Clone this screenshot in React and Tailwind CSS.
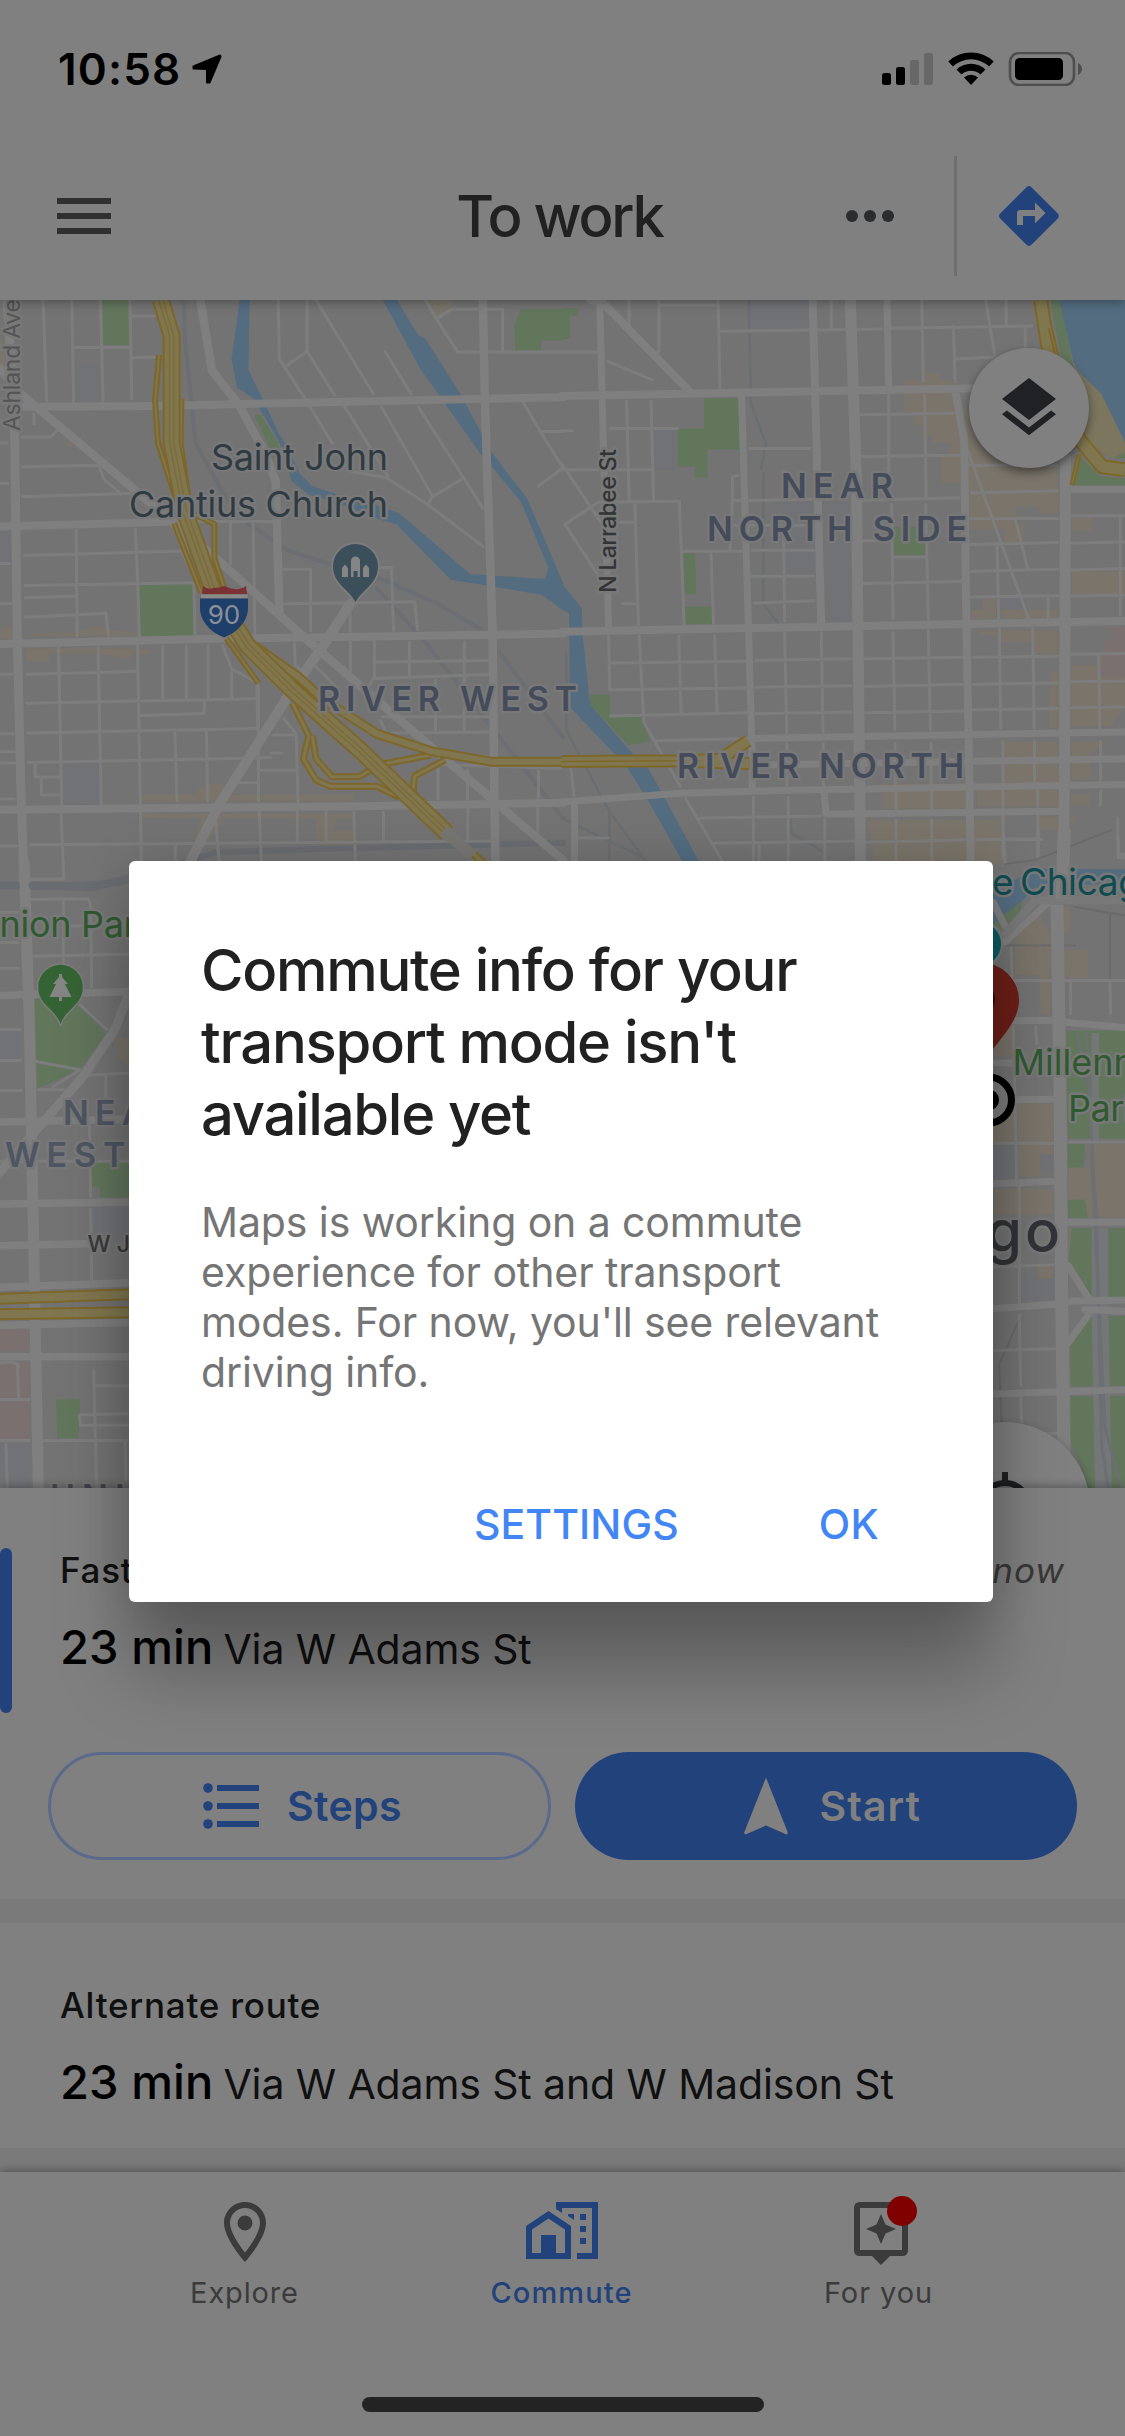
import React from "react";

const MINOR = "#7d7d7d";
const MAJOR = "#7f7f7f";

function Lines({ d, w = 3, color = MINOR, round = true }) {
  return (
    <path
      d={d}
      fill="none"
      stroke={color}
      strokeWidth={w}
      strokeLinejoin="round"
      strokeLinecap={round ? "round" : "butt"}
      vectorEffect="non-scaling-stroke"
    />
  );
}

function Highway({ d, w, stripe = false }) {
  return (
    <>
      <Lines d={d} w={w} color="#7d6729" round={false} />
      <Lines d={d} w={w - 4} color="#807750" round={false} />
      {stripe && <Lines d={d} w={5.5} color="#7d6c36" round={false} />}
      {stripe && <Lines d={d} w={2.5} color="#807750" round={false} />}
    </>
  );
}

function NorthWest() {
  return (
    <g transform="translate(0 290) scale(0.35906 0.38265)">
      <path fill="#707276" d="M205,200H285V290H205ZM0,625H35V710H0ZM175,1235H280V1345H175Z" />
      <path
        fill="#7a746a"
        d="M0,882H35V912H0ZM70,900L130,895L215,895L270,878L310,890L380,895V905H70ZM72,936H420V952H365V965L260,950H137V970H72ZM1180,26H1255V45L1215,75L1190,40ZM395,1320H550V1305L580,1290L630,1292V1320H985V1335H395ZM395,1368H985V1382H940L925,1412H985V1450H880V1382H625L580,1440H535L560,1382H395ZM195,390L208,405L192,418L180,405ZM0,130L15,150V210L0,200Z"
      />
      <path
        fill="#62765c"
        d="M284,26H358V144H288ZM384,768L537,765L540,905H386ZM1450,50H1568V132H1507V158H1435L1433,90ZM708,328L725,325L775,400L775,440L762,440L740,390Z"
      />
      <path
        fill="#536c80"
        d="M668,26L645,180L660,255L705,282L755,360L790,420L812,500L860,535L940,555L1050,598L1105,613L1255,757L1375,775L1510,797L1568,837V765L1468,545L1368,422L1280,268L1185,128L1165,118L1105,26H1066L1170,205L1338,428L1375,468L1450,552L1527,725L1518,755L1310,743L1195,650L1110,583L1080,572L960,540L870,513L835,480L800,410L775,372L730,282L692,210L695,26Z"
      />
      <Lines
        color="#6b6e72"
        w={4}
        d="M512,26L515,130L545,400L620,530L690,610L800,680L930,720L1060,755L1220,820L1335,885M1050,780L1180,915L1350,1120L1568,1380M1390,945L1568,1170"
      />
      <Lines color="#696c70" w={6} d="M0,1558L200,1555L330,1550L400,1530L600,1470L900,1460L1568,1445" />
      <Lines d="M120,26L130,290M200,26L205,290M280,26L287,290M362,26L367,285M205,150H360M367,68H430M370,177L445,175M775,26L778,180L860,300L925,400M855,26V160L795,200M855,160L932,275M880,26L1040,272M1072,160L1145,272M960,305L1080,485M1062,305L1205,540M1165,305L1345,570M980,475L1075,490L1190,560L1345,670M1190,560L1205,540L1290,492M1185,26L1215,75L1275,162H1568M1215,75L1258,50H1400V158M1458,295L1505,370H1568M1505,370L1568,465L1500,512" />
      <Lines d="M95,325V350M60,384H142L158,368M0,400H20M62,462L275,458L290,495L330,527M62,540L360,532M0,505H22M68,694L505,682L555,780M212,628L215,905M377,625L384,770L388,905M70,772L540,765L543,905M70,804L210,800M70,855L295,845L302,905M0,715H28M0,820H32M540,605H760M642,610V715M705,610L710,900M790,730H865V890M1060,725H1090L1096,890M792,820L1155,815L1163,888M975,820V892M620,930L645,990L715,1025L718,1150M820,925L822,980L845,1000" />
      <Lines d="M163,935L172,1345M273,935L282,1345M0,1004H35M75,1004L380,997M383,930L395,1568M453,930V1070M519,930V1068M580,930V1068M645,990V1068M75,1080L715,1068M392,1112L568,1107L570,1075M78,1158L718,1146M0,1160H40M80,1235L755,1222M0,1207H40M0,1236H40M98,1240V1273H168M115,1275V1320H168M487,1150L493,1335M575,1150L578,1335M720,1035V1335M755,1210H785M718,1255H820M640,1288H718M790,1120L825,1160L830,1340M760,1163H820M0,1330H40M85,1450L1375,1440M0,1453H45M170,1370L178,1540H85M488,1450V1490M722,1365L728,1490M828,1365V1440M908,1365V1440M985,1365L990,1490M1068,1365V1440M600,1380L610,1490" />
      <Lines d="M1043,920V1015M1048,972L1358,968M1040,1015L1360,1005M1140,920V1010M1293,920V1150M976,920V1015M880,985L940,1040M1065,1115H1360M1060,1125L1075,1158L1360,1155M1213,1020V1155M1220,1240L1560,1250M1220,1240V1330M1302,1255V1330M1500,1255V1330M1303,1355V1440M1498,1355V1415M1020,1045L1040,1015" />
      <Lines w={9} color={MAJOR} d="M20,26L40,330L48,900L58,1300L68,1568" />
      <Lines w={8} color={MAJOR} d="M55,305L440,303L1568,280M0,618L240,612L480,605L530,680M0,925L560,912L1568,898M0,1358L1000,1349L1568,1340" />
      <Lines w={8.5} color={MAJOR} d="M0,205L50,265L480,605L600,700L850,910L1220,1210L1568,1490M1345,26L1350,280L1372,900L1378,1420L1382,1568M558,26L590,210L665,300L735,420L768,500L778,850" />
      <Lines w={10} color={MAJOR} d="M975,820L900,930L826,1028M800,1065L610,1345L505,1540" />
      <Highway w={6} d="M443,170L432,290L440,400L490,545M505,285L503,400L530,580L597,612L597,700L632,800M485,610L560,790M630,910L720,1028" />
      <Highway w={7} d="M815,1080L860,1165L845,1225L880,1280L920,1297L1050,1297L1110,1325M870,1165L880,1225L925,1272L1000,1272L1060,1240L1200,1215M1240,1228L1155,1270L1150,1310L1190,1370" />
      <Highway w={10} d="M700,925L830,1010L900,1070L1050,1160L1200,1205L1370,1233L1568,1233" />
      <Highway w={18} stripe d="M448,26L478,120L478,400L515,580L595,790L690,930L820,1050L1000,1200L1245,1420" />
      <Lines w={12} color="#777672" round={false} d="M1235,1412L1330,1490" />
      <Highway w={8} d="M1320,1475L1360,1510" />
    </g>
  );
}

function NorthEast() {
  return (
    <g transform="translate(562 290) scale(0.35906 0.38265)">
      <path fill="#707276" d="M520,26H690V100H520ZM258,365H322V470H258ZM590,555H800V610H705V740H620V660H590ZM725,650H803V870H732ZM1140,800H1290V835H1140Z" />
      <path
        fill="#7a746a"
        d="M955,235H1010V218H1055V235H1090V262L1105,300L1115,400V505H1057V435H1080V400H1030V380H1005V352H980V320H955ZM1120,290L1180,420H1380V585H1325V565H1265V610H1290L1285,660H1230V625H1135ZM1420,595H1480L1475,630H1420ZM1420,735H1568V795H1420ZM1140,835H1170V805H1210V860H1140ZM1225,835H1380V858H1225ZM1160,890H1380V950H1315V920H1225V902H1160ZM1360,995H1380V1145H1355ZM1420,980H1500V1010H1568V1090L1530,1140H1420ZM1235,1180H1380V1290H1225V1240H1235ZM1420,1180H1520L1470,1215V1280H1420ZM890,1290H1130V1355H895ZM1155,1300H1380V1350H1155ZM850,1385H1220V1500H870ZM1420,1320H1470V1345H1420ZM1325,1375H1435L1400,1410H1325Z"
      />
      <path fill="#7a706f" d="M1530,880H1568V1010H1500V955H1510V915H1530Z" />
      <path
        fill="#62765c"
        d="M0,48H46V67H22V128H0ZM395,282H490L495,417H405V490H370V462H323V362H395ZM338,688H370L373,760V795H342ZM343,827H416L418,873H343ZM922,620H1013V693H922ZM78,1057H133V1115H222L245,1180L185,1190L80,1085ZM1360,26H1388L1430,230H1400ZM1438,432L1500,487L1568,492V510H1422ZM1540,418H1568V440H1530Z"
      />
      <path fill="#536c80" d="M1385,26H1568V400L1502,272L1450,235L1425,190ZM0,767L55,832L58,905L75,1055L80,1085L195,1210L240,1250L290,1335L385,1500H340L240,1335L180,1245L22,1090L20,845L0,835Z" />
      <path fill="#7c765f" d="M1425,200L1502,272L1568,400V425L1530,440L1440,385Z" />
      <Lines w={2.5} color="#6b6e71" d="M520,26L527,300L568,400L555,465M562,480L560,820L600,868M12,950V1150L130,1360L240,1500M635,1385L640,1420L730,1470M132,1355V1500M0,1380L220,1480" />
      <Lines d="M187,26V95M270,26V160L258,168M270,40H435M435,26L440,255M440,108L890,102M920,100L1308,94M750,26V100M1002,26L1006,240M1090,95L1095,240M1180,26L1205,170M1237,26V90M1097,180L1200,176M1290,95V150M0,162H95M128,187L252,235M180,290L187,550M248,290L255,550M133,362L322,362M0,368H30M0,470H250M0,455L110,610M100,555L325,552M100,555L8,612L100,745M203,560L213,875M163,607H200M168,820H205M327,552L340,875M335,683H500M415,688L422,872M490,485L475,487L473,600L468,680M480,550H495M523,414H690" />
      <Lines d="M830,326L1090,322M835,435L1110,432M910,275V540M1010,275L1014,540M522,550L700,547M830,550L1105,543M530,680H700M530,748H700M535,818L702,812M617,620L620,865M835,655H920M918,560L922,860M1013,560L1020,860M922,698H1010M838,767L1110,762M475,615H700M1130,420L1300,860M1262,597L1297,728M1132,458H1380M1140,530L1380,525M1137,597H1380M1137,665L1380,660M1140,735L1380,730M1140,802L1380,799M1212,665L1216,858M1354,805V855M1420,590H1568M1555,595V850M1420,662L1568,658M1420,732L1568,728M1420,800L1568,797" />
      <Lines d="M130,905L133,1045M215,905L228,1130L330,1298M325,905L332,1105M425,905L432,1105M135,975L510,970M135,1045L512,1040M135,1113L515,1105M260,1178L520,1172M540,968L805,964M540,1038L805,1034M540,1107L805,1103M845,964L1117,960M845,1036L1117,1030M845,1105L1117,1100M1145,960L1380,957M1145,1030L1380,1027M1145,1097L1380,1094M1420,952L1568,950M1420,1024L1568,1022M1420,1092L1568,1090M620,895L626,1155M722,895L727,1155M922,895L927,1150M1020,890L1026,1150M1218,885L1222,1145M1311,885L1315,1145M1495,955L1498,1148M527,1185V1295M626,1185V1295M728,1185V1295M928,1185V1290M1028,1185V1290M1228,1180V1290M1316,1180V1290M1500,1180V1290" />
      <Lines d="M345,1330L445,1490M385,1380L720,1375M425,1446L815,1440M533,1325V1490M630,1325V1490M549,1450V1490M732,1385V1490M845,1443L1125,1437M930,1310V1355M1030,1310V1355M930,1385V1490M1030,1385V1490M1228,1300V1480M1325,1300V1480M1155,1437L1330,1434M1500,1310V1345M1548,1380V1475H1568M25,1250L33,1320M45,1432H128" />
      <Lines w={7} color={MAJOR} d="M105,26L115,400L130,885M905,26L910,262M500,270L528,1160L530,1300M530,1172L1568,1155M520,1242L1568,1225M730,1310L735,1370L1390,1362M1420,521H1568M35,1340V1568M0,1338L330,1315L600,1308L1568,1292" />
      <Lines w={8} color={MAJOR} d="M0,277L1150,257M80,26L110,30L355,265M0,893L1568,865M698,26L706,300L722,880M1095,262L1120,390L1125,800L1140,1568" />
      <Lines w={11} color={MAJOR} round={false} d="M803,26L820,500L832,1568M1402,430L1400,1150L1397,1568" />
      <Highway w={13} d="M0,1232L330,1230L440,1226L518,1178M330,1231L522,1238" />
      <Lines w={1.5} color="#7d6729" d="M0,1232L330,1230" />
      <Highway w={15} d="M1333,26L1355,160L1440,390L1505,462L1568,470" />
      <Highway w={5} d="M1360,100L1380,180M1440,430L1420,510" />
    </g>
  );
}

function West() {
  return (
    <g transform="translate(0 860) scale(0.33333 0.40816)">
      <path fill="#707276" d="M0,418H60V488H0ZM275,850H390V935H275ZM0,1430H90V1540H0Z" />
      <path fill="#7a706f" d="M0,1150H85V1202H0ZM0,1232H88V1418H0Z" />
      <path fill="#7a746a" d="M350,438H390V510L355,485Z" />
      <path fill="#62765c" d="M104,340L230,345L318,425L240,515L112,560ZM275,740H390V827H300V802H275ZM168,1322H240V1350L235,1417H172Z" />
      <Lines w={8} color="#696c70" d="M0,62L280,66L390,45" />
      <Lines d="M92,48L190,46V0M92,97L265,95L272,110L275,310M190,100V255M190,162H270M0,202H55M98,236L390,230M0,265H55M240,355L320,415M105,493L240,514L160,555M0,415H60M0,491H62M0,565H65M115,563H190M270,527L390,522M317,525V585M0,738H70M118,738H390M268,640L272,825M272,855L275,1028M18,1430L22,1540M52,1235L56,1320M0,1322H88M0,1422H90M133,1422H390M281,1250L290,1540M285,1288H390M390,1356L238,1360L242,1385H390M375,1425L378,1520M0,1232Q60,1225 55,1245M0,128H55" />
      <Lines w={7.5} color={MAJOR} d="M0,332L390,322M0,642L390,635M0,843L390,838M0,945L265,940M0,1047L390,1036M0,1140L390,1133M0,1217H390" />
      <Lines w={9} color={MAJOR} d="M390,320L345,415L250,530L100,670L0,765" />
      <Lines w={11} color={MAJOR} round={false} d="M72,0L88,400L100,900L107,1200L115,1540" />
      <Highway w={12} d="M0,1075L390,1064M0,1113L390,1108" />
    </g>
  );
}

function East() {
  return (
    <g transform="translate(925 830) scale(0.33333 0.42735)">
      <path fill="#707276" d="M200,735H270V815H200ZM345,760H385V800H345ZM290,1040H390V1105H290Z" />
      <path
        fill="#7a746a"
        d="M0,0H240V75H0ZM270,230L340,195L375,240V430H345V340H270ZM415,280H490V345H415ZM205,460H265V530H205ZM415,180H435V240H415ZM280,640H385V760H345V810H280ZM200,640H270V735H200ZM205,840H385V900H205ZM430,790H490V735H600V905H480V870H430ZM340,1020H385V1050H340ZM430,930H445V1020H430Z"
      />
      <path fill="#536c80" d="M200,115L240,130L330,90L600,92V125L400,130L330,135L230,215L200,225Z" />
      <path
        fill="#62765c"
        d="M205,220L290,165L285,190L235,235ZM415,470H600V722H430ZM428,735H480L475,790H430ZM428,865H480L488,908H430ZM440,932H600V1095H495L430,1020ZM435,1200L495,1137H600V1302H437ZM437,1325H600V1540H490L437,1430Z"
      />
      <path fill="#747678" d="M500,475H522V730H500ZM500,932H550V1095L560,1540H510L500,1137Z" />
      <Lines color="#6c6f73" w={3} d="M485,475L500,730L515,930L530,1440L550,1540M500,760L520,1090L540,1400L590,1540M455,475L490,600" />
      <Lines w={2} color="#6a6a6a" d="M245,270H450M430,40L560,0M450,180L600,200M555,195V350M240,80L330,70L435,40M280,1150L222,1250L230,1385" />
      <Lines d="M0,22H350M235,0L240,75M340,0V60M580,20V65H600M205,352H600M258,275L265,440M437,355V430M555,355L557,430M265,460L275,820M332,460L335,500M205,733H385M430,730H600M205,1022L385,1018M283,830V1105M283,1135L287,1300M205,1218L390,1214M287,1330L290,1385M360,1412H395" />
      <Lines w={7} color={MAJOR} d="M138,0V70M205,447L385,445M420,450L600,462M205,545H270M205,632L385,630M205,828L385,822M430,918H600M205,925H270M205,1120L390,1110M430,1103L600,1100M430,1020L490,1095M490,1135L430,1200M480,1122L600,1126M205,1320L600,1310M205,170L240,225M240,262L370,170" />
      <Lines w={8} color="#797979" d="M240,245L330,165L600,165" />
      <Lines w={13} color={MAJOR} round={false} d="M418,0L410,160M396,175L405,600L410,1100L418,1540" />
    </g>
  );
}

function Label({ children, className = "", ...props }) {
  return (
    <text
      fontFamily="Inter, sans-serif"
      paintOrder="stroke"
      stroke="#787878"
      strokeWidth="5"
      strokeLinejoin="round"
      lengthAdjust="spacing"
      className={className}
      {...props}
    >
      {children}
    </text>
  );
}

function CityMap() {
  return (
    <svg className="block h-full w-full" viewBox="0 300 1125 1188">
      <rect x="0" y="300" width="1125" height="1188" fill="#737373" />
      <West />
      <NorthWest />
      <East />
      <NorthEast />

      <g fontSize="34" fontWeight="600" fill="#444c5b">
        <Label x="318" y="711" textLength="259">RIVER WEST</Label>
        <Label x="781" y="498" textLength="112">NEAR</Label>
        <Label x="707" y="540.5" textLength="260">NORTH SIDE</Label>
        <Label x="677" y="777.5" textLength="287">RIVER NORTH</Label>
      </g>
      <g fontSize="34" fontWeight="600" fill="#4e5663">
        <Label x="63" y="1124.5" textLength="112">NEAR</Label>
        <Label x="5" y="1166.5" textLength="240">WEST SIDE</Label>
        <Label x="50" y="1509" textLength="270" fill="#444c56">UNIVERSITY</Label>
      </g>
      <g fontSize="36" fontWeight="400" fill="#2f3b43">
        <Label x="211" y="469.5" textLength="177">Saint John</Label>
        <Label x="129" y="516.5" textLength="259">Cantius Church</Label>
      </g>
      <g fontSize="36" fill="#2f5a30">
        <Label x="-27" y="937" letterSpacing="-0.3">Union Park</Label>
        <Label x="1012.5" y="1074.5">Millennium</Label>
        <Label x="1068" y="1121" letterSpacing="-0.5">Park</Label>
      </g>
      <Label x="992" y="894.5" fontSize="37" fill="#0f4b50">e</Label>
      <Label x="1020" y="894.5" fontSize="37" letterSpacing="-0.4" fill="#0f4b50">Chicago</Label>
      <Label x="1063" y="1252" fontSize="58" fontWeight="500" letterSpacing="3" textAnchor="end" fill="#313338">Chicago</Label>
      <Label x="87.500" y="1252" fontSize="23" fontWeight="500" fill="#3a3a3a">W Jackson Blvd</Label>
      <Label transform="translate(615.5 593) rotate(-90)" fontSize="23.5" fontWeight="500" textLength="144" fill="#333436">N Larrabee St</Label>
      <Label transform="translate(20 431) rotate(-90)" fontSize="23" textLength="132" fill="#545454">Ashland Ave</Label>

      {/* Interstate shield */}
      <path d="M202,594L203,586Q208,590 213,588Q219,588 224.500,586Q230,589 235,589Q241,590 246,586L247,594Z" fill="#7a3234" />
      <rect x="201" y="594.500" width="46.500" height="4" fill="#8a8a8a" />
      <path d="M200,598.500H248V608C248,622 236,633 224,637.500C212,633 200,622 200,608Z" fill="#1f3f6b" />
      <text x="224" y="623.500" textAnchor="middle" fontFamily="Inter, sans-serif" fontSize="26" fill="#8a9097">90</text>

      {/* Church pin */}
      <path d="M355.500,605C352,592 332,586 332,566.500A23.500,23.500 0 0 1 379,566.500C379,586 359,592 355.500,605Z" fill="#3b4f5a" stroke="#7c7c7c" strokeWidth="2" />
      <path d="M342,577V568L345,564.500L348,568V577ZM363,577V568L366,564.500L369,568V577ZM351,577V561A4.500,4.500 0 0 1 360,561V577H357.500V571H353.500V577Z" fill="#858585" />

      {/* Park pin */}
      <path d="M60.500,1026C57,1010 37.500,1007 37.500,987A23,23 0 0 1 83.500,987C83.500,1007 64,1010 60.500,1026Z" fill="#356434" stroke="#7c7c7c" strokeWidth="1.500" />
      <path d="M59,974H62V977L68,984H65L71.500,997H62V1001H59V997H49.500L56,984H53L59,977Z" fill="#858585" />

      {/* Destination markers */}
      <circle cx="979" cy="944" r="23" fill="#0d5a62" stroke="#7c7c7c" strokeWidth="2" />
      <path d="M979,1078C974,1048 939,1030 939,1000A40,38 0 0 1 1019,1000C1019,1030 984,1048 979,1078Z" fill="#6e1f18" />
      <circle cx="979" cy="999" r="16" fill="#350c0b" />
      <circle cx="988.500" cy="1100" r="23" fill="#7d7d7d" stroke="#000" strokeWidth="7" />
      <circle cx="988.500" cy="1100" r="10.500" fill="#000" />
    </svg>
  );
}

function StatusBar() {
  return (
    <div className="flex h-[138px] items-center justify-between pl-[58px] pr-[42px]">
      <div className="flex items-center gap-[11px]">
        <span className="text-[44px] font-semibold leading-none tracking-[1.17px] text-black">10:58</span>
        <svg className="h-[30px] w-[30px]" viewBox="0 0 30 30">
          <path d="M28 1.500L1.500 12.500V14.500L15 15V28.500H17.500L28.500 2.500Z" fill="#000" stroke="#000" strokeWidth="2" strokeLinejoin="round" />
        </svg>
      </div>
      <svg className="h-[34px] w-[201px]" viewBox="882 52 201 34">
        <rect x="882" y="73" width="9" height="12" rx="2.500" />
        <rect x="896" y="67" width="9" height="18" rx="2.500" />
        <rect x="910" y="60" width="9" height="25" rx="2.500" fill="#676767" />
        <rect x="924" y="53" width="9" height="32" rx="2.500" fill="#676767" />
        <path d="M948.300,61.500A33,33 0 0 1 993.700,61.500L989,66.500A26,26 0 0 0 953,66.500Z" />
        <path d="M956.500,69.500A21,21 0 0 1 985.500,69.500L980.500,74.500A14,14 0 0 0 961.500,74.500Z" />
        <path d="M964,77.500A10.500,10.500 0 0 1 978,77.500L971,85Z" />
        <rect x="1010" y="53" width="64" height="32" rx="9" fill="none" stroke="#4e4e4e" strokeWidth="2.600" />
        <rect x="1015" y="58" width="48" height="22" rx="4.500" />
        <path d="M1078,63Q1082,65.500 1082,69T1078,75Z" fill="#4e4e4e" />
      </svg>
    </div>
  );
}

function AppBar() {
  return (
    <div className="grid h-[162px] grid-cols-[1fr_auto_1fr] items-center pb-[6px]">
      <div className="flex flex-col gap-[9px] pl-[57px]">
        <span className="h-[6px] w-[54px] bg-[#303030]" />
        <span className="h-[6px] w-[54px] bg-[#303030]" />
        <span className="h-[6px] w-[54px] bg-[#303030]" />
      </div>
      <h1 className="pr-[6px] text-[58px] font-medium leading-none tracking-[-2.2px] text-[#212121]">To work</h1>
      <div className="flex items-center justify-end pr-[66px]">
        <div className="flex gap-[6px]">
          <span className="size-[12px] rounded-full bg-[#2b2c2e]" />
          <span className="size-[12px] rounded-full bg-[#2b2c2e]" />
          <span className="size-[12px] rounded-full bg-[#2b2c2e]" />
        </div>
        <span className="ml-[60px] h-[120px] w-[3px] bg-[#6f6f6f]" />
        <svg className="ml-[42px] size-[60px]" viewBox="0 0 60 60">
          <path d="M27.500 1.200Q30 -1 32.500 1.200L58.800 27.500Q61 30 58.800 32.500L32.500 58.800Q30 61 27.500 58.800L1.200 32.500Q-1 30 1.200 27.500Z" fill="#21427a" />
          <path d="M18 39V27Q18 24 21 24H36V16.500L46.500 27L36 37.500V30H24V39Z" fill="#808080" />
        </svg>
      </div>
    </div>
  );
}

function Route({ label, note, via, className }) {
  return (
    <div className={className}>
      <div className="flex justify-between px-[60px] pt-[58px] text-[35px] leading-[48px] text-[#101010]">
        <span className="font-medium tracking-[0.75px]">{label}</span>
        {note && <span className="italic tracking-[1px] text-[#383838]">{note}</span>}
      </div>
      <div className="mt-[23px] flex items-baseline gap-[10px] pl-[60px] leading-[60px]">
        <span className="text-[47px] font-medium tracking-[0.1px] text-black">23 min</span>
        <span className="text-[41px] tracking-[-0.12px] text-[#101010]">{via}</span>
      </div>
    </div>
  );
}

function Routes() {
  return (
    <div className="flex h-[684px] flex-col bg-[#7a7a7a]">
      <section className="relative h-[411px] bg-[#808080]">
        <span className="absolute left-0 top-[60px] h-[165px] w-[12px] rounded-[6px] bg-[#21427a]" />
        <Route className="h-[264px]" label="Fastest route" note="Updated now" via="Via W Adams St" />
        <div className="grid h-[108px] grid-cols-2 gap-6 px-12 text-[41px] font-semibold">
          <button className="flex items-center rounded-full border-[3px] border-[#5a6a8b] pl-[151px] text-[#21427a]">
            <svg className="h-[46px] w-[57px]" viewBox="0 0 57 46" fill="#21427a">
              <circle cx="6" cy="5" r="4.800" />
              <circle cx="6" cy="23" r="4.800" />
              <circle cx="6" cy="41" r="4.800" />
              <path d="M15 2H57V8H15ZM15 20H57V26H15ZM15 38H57V44H15Z" />
            </svg>
            <span className="ml-[28px] pt-px tracking-[0.36px]">Steps</span>
          </button>
          <button className="flex items-center rounded-full bg-[#21427a] pl-[168px] text-[#808080]">
            <svg className="h-[58px] w-[46px]" viewBox="0 0 46 58">
              <path d="M23 0.500L45 56L43.500 57.500L23 48.500L2.500 57.500L1 56Z" fill="#808080" />
            </svg>
            <span className="ml-[31px] pt-px tracking-[1.03px]">Start</span>
          </button>
        </div>
      </section>
      <section className="mt-6 h-[225px] bg-[#808080]">
        <Route label="Alternate route" via="Via W Adams St and W Madison St" />
      </section>
    </div>
  );
}

function ExploreIcon() {
  return (
    <svg className="h-[63px] w-[72px]" viewBox="0 0 72 63" fill="#3b3b3b">
      <path
        fillRule="evenodd"
        d="M36 0C24.400 0 15 9.400 15 21C15 36.800 36 60 36 60S57 36.800 57 21C57 9.400 47.600 0 36 0ZM36 6C44.300 6 51 12.700 51 21C51 29.700 42.400 42.500 36 50.600C29.700 42.600 21 29.600 21 21C21 12.700 27.700 6 36 6ZM36 13.500A7.500 7.500 0 0 0 36 28.500A7.500 7.500 0 0 0 36 13.500Z"
      />
    </svg>
  );
}

function CommuteIcon() {
  return (
    <svg className="h-[63px] w-[72px]" viewBox="0 0 72 63" fill="#21427a">
      <path fillRule="evenodd" d="M22.500 9L45 24V57H0V24ZM22.500 16.500L6 27.500V51H15V33H30V51H39V27.500Z" />
      <path d="M30 0H72V57H51V51H66V6H36V11L30 7ZM42 12H48V18L42 14ZM54 12H60V18H54ZM54 24H60V30H54ZM54 36H60V42H54Z" />
    </svg>
  );
}

function ForYouIcon() {
  return (
    <svg className="h-[63px] w-[72px] overflow-visible" viewBox="0 0 72 63" fill="#3b3b3b">
      <path fillRule="evenodd" d="M17 0H59Q65 0 65 6V48Q65 54 59 54H47L38 63L29 54H17Q11 54 11 48V6Q11 0 17 0ZM17 6V48H59V6Z" />
      <path d="M38 12L42.500 22.500L53 27L42.500 31.500L38 42L33.500 31.500L23 27L33.500 22.500Z" />
      <circle cx="59" cy="9" r="15" fill="#800000" />
    </svg>
  );
}

function BottomNav() {
  return (
    <nav className="relative flex h-[264px] flex-col justify-between bg-[#808080] pb-6 pt-[30px] shadow-[0_-2px_8px_rgba(0,0,0,0.3)]">
      <div className="grid grid-cols-3 pl-[86px] pr-[88px] text-[29px] leading-[36px] text-[#3b3b3b]">
        <div className="flex flex-col items-center gap-[10px]">
          <ExploreIcon />
          <span className="tracking-[0.86px]">Explore</span>
        </div>
        <div className="flex flex-col items-center gap-[10px] text-[#21427a]">
          <CommuteIcon />
          <span className="font-medium tracking-[1.1px]">Commute</span>
        </div>
        <div className="flex flex-col items-center gap-[10px]">
          <ForYouIcon />
          <span className="tracking-[0.9px]">For you</span>
        </div>
      </div>
      <div className="ml-[362px] h-[15px] w-[402px] rounded-full bg-[#232323]" />
    </nav>
  );
}

function Dialog() {
  return (
    <div
      role="dialog"
      className="absolute left-[129px] top-[861px] flex h-[741px] w-[864px] flex-col rounded-[6px] bg-white pt-[73px] shadow-[0_72px_72px_rgba(0,0,0,0.26),0_0_48px_rgba(0,0,0,0.16)]"
    >
      <h2 className="pl-[72px] text-[58px] font-medium leading-[72px] tracking-[-1.3px] text-[#212121]">
        Commute info for your
        <br />
        transport mode isn't
        <br />
        available yet
      </h2>
      <p className="mt-[47px] pl-[72px] text-[41px] leading-[50px] tracking-[-0.1px] text-[#757575]">
        Maps is working on a commute
        <br />
        experience for other transport
        <br />
        modes. For now, you'll see relevant
        <br />
        driving info.
      </p>
      <div className="mt-[74px] flex h-[108px] items-center justify-end gap-[140px] pr-[114px] text-[41px] font-medium text-[#4285f4]">
        <button className="tracking-[0.1px]">SETTINGS</button>
        <button className="tracking-[0.3px]">OK</button>
      </div>
    </div>
  );
}

export default function App() {
  return (
    <div className="relative flex h-[2436px] w-[1125px] flex-col overflow-hidden bg-[#808080] font-['Inter',sans-serif]">
      <header className="relative z-10 h-[300px] bg-[#808080] shadow-[0_2px_10px_rgba(0,0,0,0.35)]">
        <StatusBar />
        <AppBar />
      </header>
      <main className="relative h-[1188px] overflow-hidden">
        <CityMap />
        <button className="absolute right-[36px] top-[48px] flex size-[120px] items-center justify-center rounded-full bg-[#808080] shadow-[0_4px_10px_rgba(0,0,0,0.45)]">
          <svg className="size-[72px]" viewBox="0 0 24 24" fill="#202124">
            <path d="M11.990 18.540l-7.370-5.730L3 14.070l9 7 9-7-1.630-1.270-7.380 5.740zM12 16l7.360-5.730L21 9l-9-7-9 7 1.630 1.270L12 16z" />
          </svg>
        </button>
        <button className="absolute left-[920px] top-[1122px] flex size-[170px] items-center justify-center rounded-full bg-[#808080] shadow-[0_4px_10px_rgba(0,0,0,0.4)]">
          <svg className="size-[72px]" viewBox="0 0 72 72">
            <circle cx="36" cy="36" r="24" fill="none" stroke="#202124" strokeWidth="6" />
            <path d="M33 1H39V12H33ZM33 60H39V71H33ZM1 33H12V39H1ZM60 33H71V39H60Z" fill="#202124" />
          </svg>
        </button>
      </main>
      <div className="relative shadow-[0_-2px_8px_rgba(0,0,0,0.3)]">
        <Routes />
      </div>
      <BottomNav />
      <Dialog />
    </div>
  );
}
